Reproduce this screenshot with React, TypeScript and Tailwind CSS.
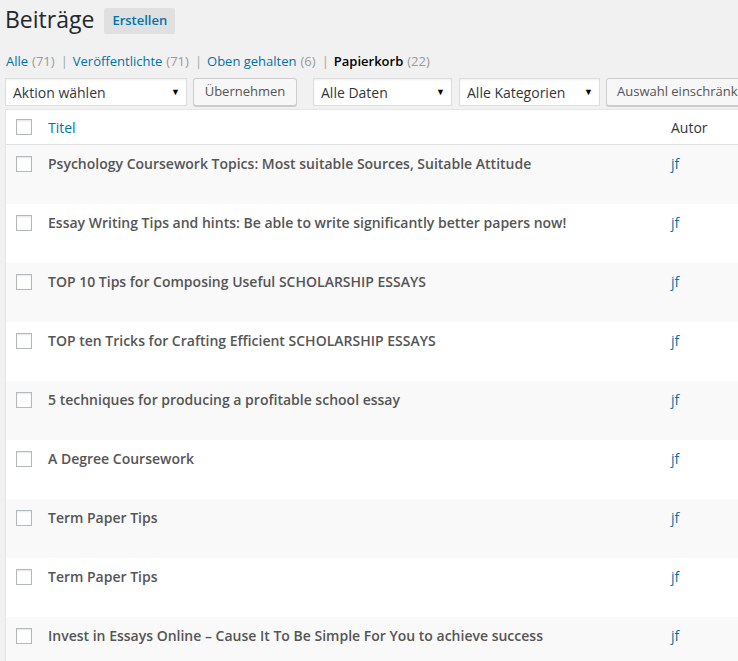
import React from "react";

const rows = [
  "Psychology Coursework Topics: Most suitable Sources, Suitable Attitude",
  "Essay Writing Tips and hints: Be able to write significantly better papers now!",
  "TOP 10 Tips for Composing Useful SCHOLARSHIP ESSAYS",
  "TOP ten Tricks for Crafting Efficient SCHOLARSHIP ESSAYS",
  "5 techniques for producing a profitable school essay",
  "A Degree Coursework",
  "Term Paper Tips",
  "Term Paper Tips",
  "Invest in Essays Online – Cause It To Be Simple For You to achieve success",
];

function Select({ label, w }: { label: string; w: string }) {
  return (
    <div
      className={`${w} h-[28px] bg-white border border-[#ddd] shadow-[inset_0_1px_2px_rgba(0,0,0,0.07)] flex items-center justify-between pl-[7px] pr-[6px] text-[14px] text-[#32373c] shrink-0`}
    >
      <span>{label}</span>
      <span className="text-[9px] text-black">▼</span>
    </div>
  );
}

function Button({ label, w }: { label: string; w?: string }) {
  return (
    <div
      className={`${w ?? ""} h-[28px] bg-[#f7f7f7] border border-[#ccc] rounded-[3px] shadow-[0_1px_0_#ccc] flex items-center justify-center px-[10px] text-[13px] text-[#555] shrink-0 whitespace-nowrap`}
    >
      {label}
    </div>
  );
}

function Checkbox() {
  return <div className="w-[16px] h-[16px] bg-white border border-[#b4b9be] shadow-[inset_0_1px_2px_rgba(0,0,0,0.1)]" />;
}

function Sep() {
  return <span className="text-[#a0a5aa] ml-[6px] mr-[5px]">|</span>;
}

export default function App() {
  return (
    <div
      className="w-[738px] h-[661px] overflow-hidden bg-[#f1f1f1] text-[13px] text-[#444]"
      style={{ fontFamily: '"Open Sans", "Noto Sans", sans-serif' }}
    >
      <div className="w-[900px]">
        <div className="flex items-center pl-[5px] pt-[4px] h-[35px]">
          <h1 className="text-[23px] text-[#23282d] leading-[29px] font-normal">Beiträge</h1>
          <div className="ml-[10px] mt-[3px] h-[26px] px-[8px] bg-[#e0e0e0] rounded-[2px] flex items-center text-[13px] font-semibold text-[#0073aa]">
            Erstellen
          </div>
        </div>

        <div className="flex items-center pl-[6px] mt-[17px] h-[20px] text-[13px] whitespace-nowrap">
          <span className="text-[#0073aa]">Alle</span>
          <span className="text-[#999] ml-[4px]">(71)</span>
          <Sep />
          <span className="text-[#0073aa]">Veröffentlichte</span>
          <span className="text-[#999] ml-[4px]">(71)</span>
          <Sep />
          <span className="text-[#0073aa]">Oben gehalten</span>
          <span className="text-[#999] ml-[4px]">(6)</span>
          <Sep />
          <span className="text-black font-semibold">Papierkorb</span>
          <span className="text-[#999] ml-[4px]">(22)</span>
        </div>

        <div className="flex items-center pl-[5px] mt-[6px]">
          <Select label="Aktion wählen" w="w-[182px]" />
          <div className="ml-[6px]">
            <Button label="Übernehmen" w="w-[104px]" />
          </div>
          <div className="ml-[16px]">
            <Select label="Alle Daten" w="w-[139px]" />
          </div>
          <div className="ml-[7px]">
            <Select label="Alle Kategorien" w="w-[141px]" />
          </div>
          <div className="ml-[6px]">
            <Button label="Auswahl einschränken" />
          </div>
        </div>

        <div className="ml-[5px] mt-[3px] bg-white border border-[#e5e5e5] shadow-[0_1px_1px_rgba(0,0,0,0.04)]">
          <div className="flex items-center h-[35px] border-b border-[#e1e1e1]">
            <div className="w-[42px] pl-[10px] shrink-0 flex">
              <Checkbox />
            </div>
            <div className="w-[623px] shrink-0 text-[14px] text-[#0073aa]">Titel</div>
            <div className="text-[14px] text-[#32373c]">Autor</div>
          </div>
          {rows.map((t, i) => (
            <div
              key={i}
              className={`flex items-start h-[59px] ${i % 2 === 0 ? "bg-[#f9f9f9]" : "bg-white"}`}
            >
              <div className="w-[42px] pl-[10px] pt-[11px] shrink-0 flex">
                <Checkbox />
              </div>
              <div className="w-[623px] shrink-0 pt-[9px] text-[14px] leading-[20px] font-semibold text-[#555] whitespace-nowrap">
                {t}
              </div>
              <div className="pt-[9px] text-[14px] leading-[20px] text-[#0073aa]">jf</div>
            </div>
          ))}
        </div>
      </div>
    </div>
  );
}
